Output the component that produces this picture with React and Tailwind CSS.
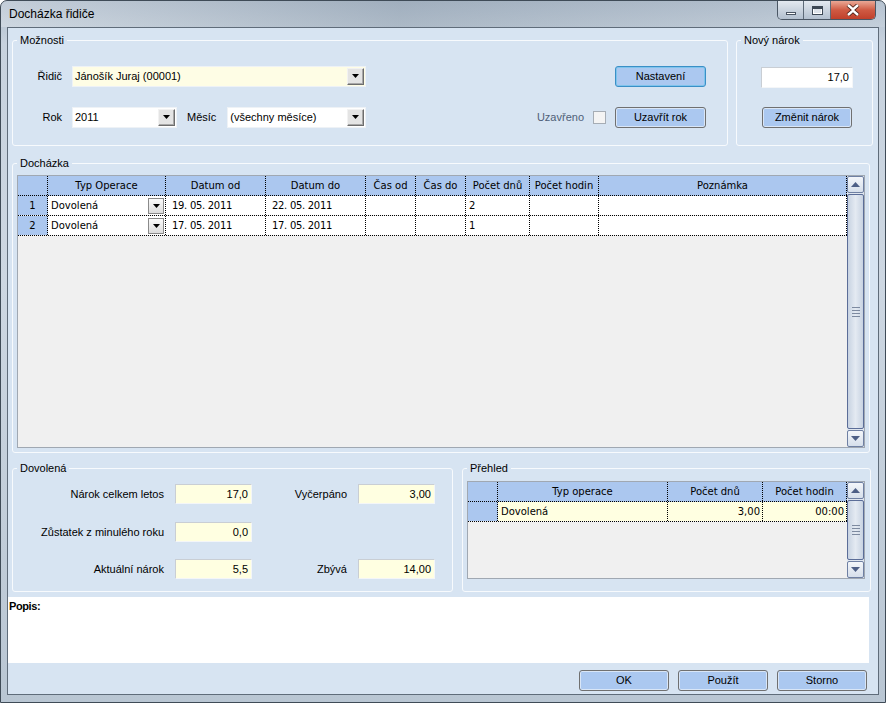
import React from "react";

const ui = "font-['Liberation_Sans',Arial,sans-serif]";
const gridFont = "font-['DejaVu_Sans',Verdana,sans-serif]";

// small black triangle used by combo boxes
const DownTri = ({ color = "#000" }) => (
  <svg width="7" height="4" viewBox="0 0 7 4">
    <path d="M0 0h7L3.5 4z" fill={color} />
  </svg>
);

const UpTri = ({ color = "#4d5f86" }) => (
  <svg width="9" height="5" viewBox="0 0 9 5">
    <path d="M0 5h9L4.5 0z" fill={color} />
  </svg>
);

const DropBtn = ({ className = "" }) => (
  <div
    className={`flex items-center justify-center w-[17px] h-[17px] border border-t-[#f2f2f2] border-l-[#f2f2f2] border-b-[#6d6d6d] border-r-[#6d6d6d] bg-[#e4e4e4] shadow-[inset_-1px_-1px_0_#a8a8a8] ${className}`}
  >
    <DownTri />
  </div>
);

const Combo = ({ className = "", value, yellow }) => (
  <div
    className={`flex items-center h-[21px] border border-[#eef2f6] ${yellow ? "bg-[#fefde5]" : "bg-white"} ${className}`}
  >
    <span className="flex-1 pl-[2px] text-[11px] whitespace-nowrap overflow-hidden">{value}</span>
    <DropBtn className="mr-[1px]" />
  </div>
);

const Button = ({ children, className = "", focused }) => (
  <div
    className={`flex items-center justify-center h-[21px] rounded-[3px] border text-[11px] bg-[#abc8f0] ${
      focused
        ? "border-[#3a8fc7] shadow-[inset_0_0_0_1px_#7fc4ec]"
        : "border-[#707070] shadow-[inset_0_0_0_1px_#d9e6f7]"
    } ${className}`}
  >
    {children}
  </div>
);

const Field = ({ value, className = "", yellow = true }) => (
  <div
    className={`flex items-center justify-end h-[20px] pr-[3px] text-[11px] border border-t-[#c9ced4] border-l-[#c9ced4] border-b-[#f4f6f8] border-r-[#f4f6f8] ${yellow ? "bg-[#ffffe1]" : "bg-white"} ${className}`}
  >
    {value}
  </div>
);

const Group = ({ title, className = "", children }) => (
  <fieldset className={`border border-[#f7fafd] rounded-[3px] ${className}`}>
    <legend className="ml-[4px] px-[3px] text-[11px] leading-[13px]">{title}</legend>
    {children}
  </fieldset>
);

const VScroll = () => (
  <div className="w-[17px] flex flex-col bg-[#dfe6ef]">
    <div className="h-[17px] flex items-center justify-center rounded-[2px] border border-[#6f80a3] bg-gradient-to-b from-[#f3f6fa] to-[#d6dfeb]">
      <UpTri />
    </div>
    <div className="flex-1 my-[1px] flex flex-col items-center justify-center gap-[2px] rounded-[2px] border border-[#5b6d98] bg-[linear-gradient(to_right,#c8d3e2,#e4eaf2_50%,#c8d3e2)]">
      <div className="w-[8px] h-[1px] bg-[#7d8aa0]" />
      <div className="w-[8px] h-[1px] bg-[#7d8aa0]" />
      <div className="w-[8px] h-[1px] bg-[#7d8aa0]" />
      <div className="w-[8px] h-[1px] bg-[#7d8aa0]" />
    </div>
    <div className="h-[17px] flex items-center justify-center rounded-[2px] border border-[#6f80a3] bg-gradient-to-b from-[#f3f6fa] to-[#d6dfeb]">
      <svg width="9" height="5" viewBox="0 0 9 5">
        <path d="M0 0h9L4.5 5z" fill="#4d5f86" />
      </svg>
    </div>
  </div>
);

const cell = "border-r border-dotted border-black h-full flex items-center whitespace-nowrap overflow-hidden";

const attendance = [
  { n: 1, typ: "Dovolená", od: "19. 05. 2011", do: "22. 05. 2011", dny: "2" },
  { n: 2, typ: "Dovolená", od: "17. 05. 2011", do: "17. 05. 2011", dny: "1" },
];

const AttendanceGrid = () => (
  <div className={`flex ml-[4px] mt-[5px] w-[848px] h-[273px] border border-[#a0a8b2] bg-[#f0f0f0] ${gridFont} text-[10px]`}>
    <div className="flex-1 flex flex-col">
      <div className="flex h-[20px] bg-[#abc7ef] border-b border-dotted border-black">
        <div className={`${cell} w-[30px]`} />
        <div className={`${cell} w-[118px] justify-center`}>Typ Operace</div>
        <div className={`${cell} w-[100px] justify-center`}>Datum od</div>
        <div className={`${cell} w-[100px] justify-center`}>Datum do</div>
        <div className={`${cell} w-[50px] justify-center`}>Čas od</div>
        <div className={`${cell} w-[50px] justify-center`}>Čas do</div>
        <div className={`${cell} w-[64px] justify-center`}>Počet dnů</div>
        <div className={`${cell} w-[69px] justify-center`}>Počet hodin</div>
        <div className={`${cell} w-[248px] justify-center`}>Poznámka</div>
      </div>
      {attendance.map((r) => (
        <div key={r.n} className="flex h-[20px] border-b border-dotted border-black">
          <div className={`${cell} w-[30px] justify-center bg-[#abc7ef]`}>{r.n}</div>
          <div className={`${cell} w-[118px] bg-white pl-[3px]`}>
            <span className="flex-1">{r.typ}</span>
            <div className="flex items-center justify-center w-[16px] h-[16px] mr-[1px] border border-[#8a8a8a] bg-gradient-to-b from-[#fafafa] to-[#dcdcdc]">
              <DownTri />
            </div>
          </div>
          <div className={`${cell} w-[100px] bg-white pl-[6px] tracking-[-0.3px]`}>{r.od}</div>
          <div className={`${cell} w-[100px] bg-white pl-[6px] tracking-[-0.3px]`}>{r.do}</div>
          <div className={`${cell} w-[50px] bg-white`} />
          <div className={`${cell} w-[50px] bg-white`} />
          <div className={`${cell} w-[64px] bg-white pl-[3px]`}>{r.dny}</div>
          <div className={`${cell} w-[69px] bg-white`} />
          <div className={`${cell} w-[248px] bg-white`} />
        </div>
      ))}
    </div>
    <VScroll />
  </div>
);

const SummaryGrid = () => (
  <div className={`flex ml-[4px] mt-[6px] w-[398px] h-[98px] border border-[#a0a8b2] bg-[#f0f0f0] ${gridFont} text-[10px]`}>
    <div className="flex-1 flex flex-col">
      <div className="flex h-[20px] bg-[#abc7ef] border-b border-dotted border-black">
        <div className={`${cell} w-[30px]`} />
        <div className={`${cell} w-[170px] justify-center`}>Typ operace</div>
        <div className={`${cell} w-[95px] justify-center`}>Počet dnů</div>
        <div className={`${cell} w-[84px] justify-center`}>Počet hodin</div>
      </div>
      <div className="flex h-[20px] border-b border-dotted border-black">
        <div className={`${cell} w-[30px] bg-[#abc7ef]`} />
        <div className={`${cell} w-[170px] bg-[#ffffe1] pl-[3px]`}>Dovolená</div>
        <div className={`${cell} w-[95px] bg-[#ffffe1] justify-end pr-[2px]`}>3,00</div>
        <div className={`${cell} w-[84px] bg-[#ffffe1] justify-end pr-[2px]`}>00:00</div>
      </div>
    </div>
    <VScroll />
  </div>
);

const CaptionButtons = () => (
  <div className="flex h-[19px] mr-[9px] rounded-b-[5px] border border-t-0 border-[#4a5664] overflow-hidden">
    <div className="w-[26px] flex items-end justify-center pb-[4px] bg-gradient-to-b from-[#e3e9f0] to-[#b3c0cf] border-r border-[#5d6a78]">
      <div className="w-[10px] h-[3px] bg-white border border-[#4a5563]" />
    </div>
    <div className="w-[27px] flex items-center justify-center bg-gradient-to-b from-[#e3e9f0] to-[#b3c0cf] border-r border-[#5d6a78]">
      <div className="w-[11px] h-[9px] bg-[#dde3ea] border border-[#3d4855] shadow-[inset_0_2px_0_#3d4855,inset_0_0_0_1px_white]" />
    </div>
    <div className="w-[44px] flex items-center justify-center bg-gradient-to-b from-[#e9a896] via-[#cf5a43] to-[#c0402b]">
      <svg width="14" height="12" viewBox="0 0 14 12">
        <path d="M2 1l5 4.5L12 1M2 11l5-4.5L12 11" stroke="#4a2018" strokeWidth="4.2" fill="none" />
        <path d="M2 1l5 4.5L12 1M2 11l5-4.5L12 11" stroke="#fff" strokeWidth="2.4" fill="none" />
      </svg>
    </div>
  </div>
);

export default function App() {
  return (
    <div className={`w-[886px] h-[703px] flex flex-col border border-[#3f4b57] rounded-t-[7px] overflow-hidden bg-[linear-gradient(to_bottom,#aebccb,#c7d2de_6%,#cdd7e2_40%,#b9c6d3)] ${ui} text-black`}>
      <div className="h-[26px] flex items-start justify-between bg-[linear-gradient(to_right,rgba(255,255,255,0.25),rgba(120,135,150,0.25)_45%,rgba(255,255,255,0.1))]">
        <div className="pl-[8px] pt-[6px] text-[12px] leading-[15px]">Docházka řidiče</div>
        <CaptionButtons />
      </div>
      <div className="flex-1 flex px-[6px] pb-[7px]">
        <div className="flex-1 flex flex-col border border-[#5f6c7a] bg-[#d7e4f2] pt-[6px]">
          <div className="flex pl-[4px] gap-[8px]">
            <Group title="Možnosti" className="w-[716px] h-[112px]">
              <div className="pt-[18px] pr-[21px]">
                <div className="flex items-center">
                  <span className="w-[49px] text-right text-[11px]">Řidič</span>
                  <Combo className="ml-[10px] w-[294px]" value="Jánošík Juraj (00001)" yellow />
                  <Button focused className="ml-auto w-[91px] mt-[1px]">Nastavení</Button>
                </div>
                <div className="flex items-center mt-[19px]">
                  <span className="w-[49px] text-right text-[11px]">Rok</span>
                  <Combo className="ml-[10px] w-[105px]" value="2011" />
                  <span className="ml-[10px] text-[11px]">Měsíc</span>
                  <Combo className="ml-[11px] w-[139px]" value="(všechny měsíce)" />
                  <span className="ml-auto text-[11px] text-[#4f5f78]">Uzavřeno</span>
                  <div className="ml-[9px] w-[13px] h-[13px] border border-[#a6adb5] bg-[#f4f4f4]" />
                  <Button className="ml-[9px] w-[91px] mt-[1px]">Uzavřít rok</Button>
                </div>
              </div>
            </Group>
            <Group title="Nový nárok" className="w-[137px] h-[112px]">
              <Field value="17,0" yellow={false} className="ml-[24px] mt-[20px] w-[92px] h-[21px]" />
              <Button className="ml-[25px] mt-[19px] w-[90px] h-[20px]">Změnit nárok</Button>
            </Group>
          </div>

          <Group title="Docházka" className="ml-[4px] mt-[11px] w-[858px] h-[296px]">
            <AttendanceGrid />
          </Group>

          <div className="flex pl-[4px] gap-[9px] mt-[9px]">
            <Group title="Dovolená" className="w-[441px] h-[130px]">
              <div className="flex flex-col gap-[17px] pt-[9px] text-[11px]">
                <div className="flex items-center">
                  <span className="w-[151px] text-right">Nárok celkem letos</span>
                  <Field value="17,0" className="ml-[11px] w-[77px]" />
                  <span className="w-[95px] text-right">Vyčerpáno</span>
                  <Field value="3,00" className="ml-[11px] w-[77px]" />
                </div>
                <div className="flex items-center mt-[1px]">
                  <span className="w-[151px] text-right">Zůstatek z minulého roku</span>
                  <Field value="0,0" className="ml-[11px] w-[77px]" />
                </div>
                <div className="flex items-center">
                  <span className="w-[151px] text-right">Aktuální nárok</span>
                  <Field value="5,5" className="ml-[11px] w-[77px]" />
                  <span className="w-[95px] text-right">Zbývá</span>
                  <Field value="14,00" className="ml-[11px] w-[77px]" />
                </div>
              </div>
            </Group>
            <Group title="Přehled" className="w-[409px] h-[130px]">
              <SummaryGrid />
            </Group>
          </div>

          <div className="mt-[5px] h-[66px] w-[861px] bg-white">
            <div className="pl-[1px] pt-[1px] text-[11px] font-bold tracking-[-0.4px]">Popis:</div>
          </div>

          <div className="flex justify-end gap-[9px] mt-[7px] pr-[11px]">
            <Button className="w-[90px] h-[20px]">OK</Button>
            <Button className="w-[90px] h-[20px]">Použít</Button>
            <Button className="w-[90px] h-[20px]">Storno</Button>
          </div>
        </div>
      </div>
    </div>
  );
}
